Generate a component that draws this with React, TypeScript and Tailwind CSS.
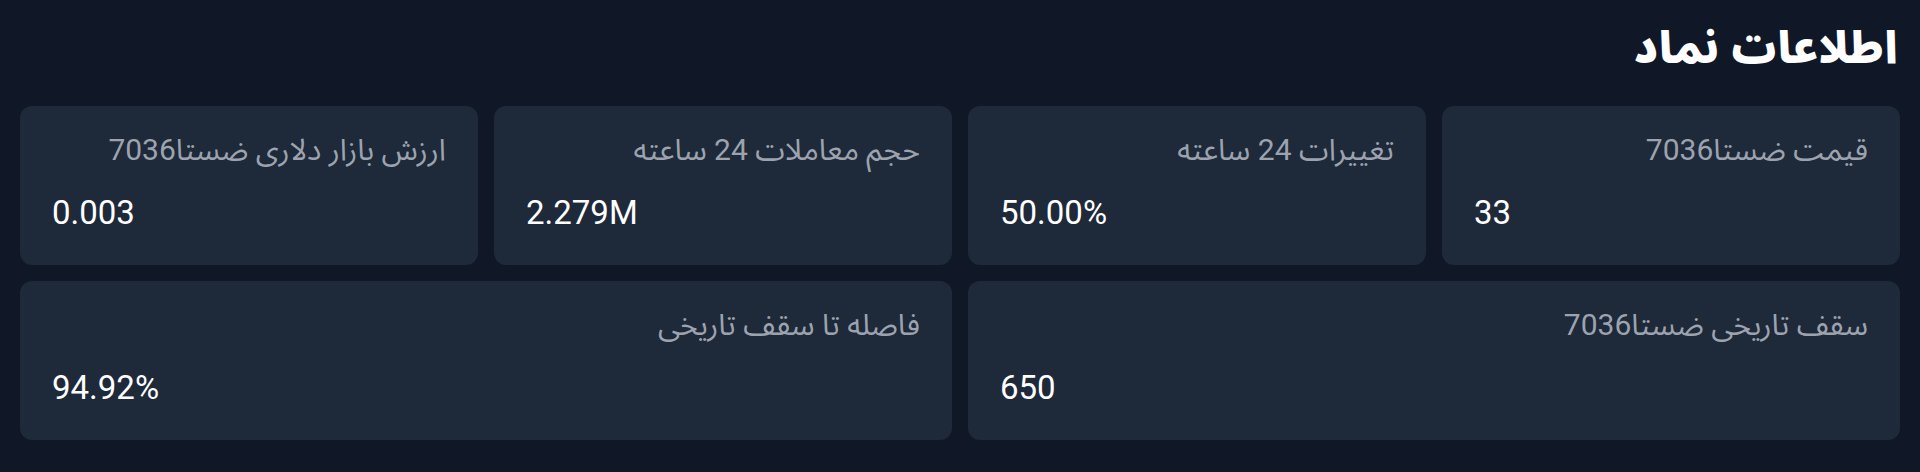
import React from 'react';

interface Stat {
  label: string;
  value: string;
}

const topStats: Stat[] = [
  { label: 'قیمت ضستا7036', value: '33' },
  { label: 'تغییرات 24 ساعته', value: '50.00%' },
  { label: 'حجم معاملات 24 ساعته', value: '2.279M' },
  { label: 'ارزش بازار دلاری ضستا7036', value: '0.003' },
];

const bottomStats: Stat[] = [
  { label: 'سقف تاریخی ضستا7036', value: '650' },
  { label: 'فاصله تا سقف تاریخی', value: '94.92%' },
];

function StatCard({ label, value }: Stat) {
  return (
    <div className="h-[159px] rounded-xl bg-[#1e2939] px-8 pt-[26px]">
      <p className="text-right text-[30px] leading-[36px] text-[#9ca3af]">{label}</p>
      <p dir="ltr" className="mt-[26px] text-left text-[33px] leading-[38px] text-white">
        {value}
      </p>
    </div>
  );
}

export default function App() {
  return (
    <div
      dir="rtl"
      className="min-h-[472px] bg-[#101828] p-5"
      style={{ fontFamily: 'Roboto, "Noto Sans Arabic", "Noto Sans", sans-serif' }}
    >
      <h1 className="mb-[30px] pr-[2px] text-[44px] font-black leading-[56px] text-white">اطلاعات نماد</h1>

      {/* top row */}
      <div className="grid grid-cols-4 gap-4">
        {topStats.map((s) => (
          <StatCard key={s.label} {...s} />
        ))}
      </div>

      {/* bottom row */}
      <div className="mt-4 grid grid-cols-2 gap-4">
        {bottomStats.map((s) => (
          <StatCard key={s.label} {...s} />
        ))}
      </div>
    </div>
  );
}
